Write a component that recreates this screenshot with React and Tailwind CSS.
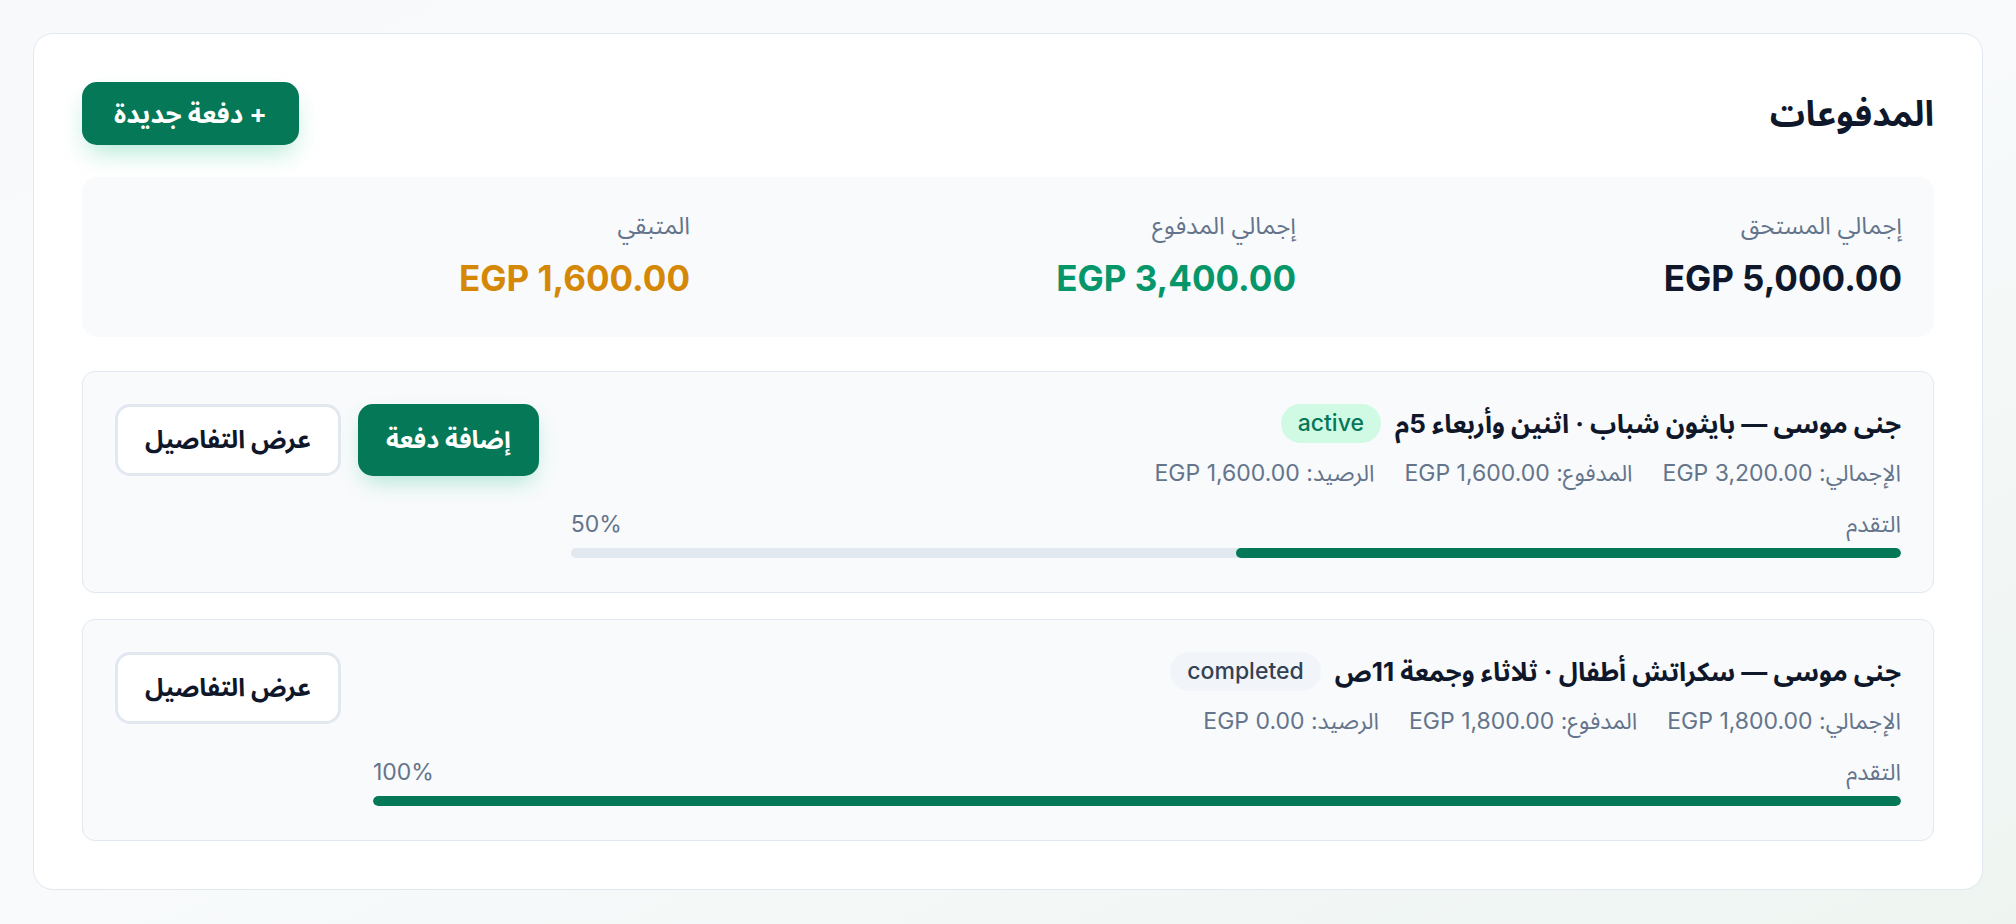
import React from "react";

const payments = [
  {
    id: 1,
    title: "جنى موسى — بايثون شباب · اثنين وأربعاء 5م",
    status: "active",
    total: "EGP 3,200.00",
    paid: "EGP 1,600.00",
    balance: "EGP 1,600.00",
    progress: 50,
    canPay: true,
  },
  {
    id: 2,
    title: "جنى موسى — سكراتش أطفال · ثلاثاء وجمعة 11ص",
    status: "completed",
    total: "EGP 1,800.00",
    paid: "EGP 1,800.00",
    balance: "EGP 0.00",
    progress: 100,
    canPay: false,
  },
];

function StatusBadge({ status }) {
  const styles =
    status === "active"
      ? "bg-[#d1fae5] text-[#047857]"
      : "bg-[#f1f5f9] text-[#334155]";
  return (
    <span
      className={`inline-flex h-[39px] items-center rounded-full px-[17px] text-[23px] font-medium ${styles}`}
    >
      {status}
    </span>
  );
}

function PaymentCard({ item }) {
  return (
    <div className="flex items-start gap-[32px] rounded-[13px] border border-[#e2e8f0] bg-[#f8fafc] px-[32px] pb-[34px] pt-[32px]">
      {/* Info */}
      <div className="flex-1">
        <div className="flex h-[39px] items-center gap-[14px]">
          <h3 className="text-[26px] font-bold text-[#0f172a]">{item.title}</h3>
          <StatusBadge status={item.status} />
        </div>

        <div className="mt-[15px] flex gap-[30px] text-[23px] leading-[30px] text-[#64748b]">
          <span>الإجمالي: {item.total}</span>
          <span>المدفوع: {item.paid}</span>
          <span>الرصيد: {item.balance}</span>
        </div>

        <div className="mt-[21px] flex items-center justify-between text-[23px] leading-[30px] text-[#64748b]">
          <span>التقدم</span>
          <span>{item.progress}%</span>
        </div>
        <div className="mt-[9px] h-[10px] w-full overflow-hidden rounded-full bg-[#e2e8f0]">
          <div
            className="h-full rounded-full bg-[#047857]"
            style={{ width: `${item.progress}%` }}
          />
        </div>
      </div>

      {/* Actions */}
      <div className="flex shrink-0 items-center gap-[17px]">
        {item.canPay && (
          <button className="h-[72px] rounded-[15px] bg-[#047857] px-[28px] text-[25px] font-bold text-white shadow-[0_10px_22px_-6px_rgba(16,185,129,0.35)]">
            إضافة دفعة
          </button>
        )}
        <button className="h-[72px] rounded-[15px] border-[3px] border-[#e2e8f0] bg-white px-[27px] text-[25px] font-bold text-[#0f172a]">
          عرض التفاصيل
        </button>
      </div>
    </div>
  );
}

export default function App() {
  return (
    <div
      dir="rtl"
      className="min-h-screen bg-gradient-to-br from-[#f7f9fa] via-[#f8fafb] to-[#eef5f1] p-[33px]"
      style={{ fontFamily: '"Inter", "Noto Sans Arabic", "DejaVu Sans", sans-serif' }}
    >
      <div className="rounded-[20px] border border-[#e2e8f0] bg-white p-[48px]">
        {/* Header */}
        <div className="flex items-center justify-between">
          <h2 className="text-[35px] font-bold text-[#0f172a]">المدفوعات</h2>
          <button className="h-[63px] rounded-[15px] bg-[#047857] px-[32px] text-[26px] font-bold text-white shadow-[0_12px_26px_-6px_rgba(16,185,129,0.35)]">
            + دفعة جديدة
          </button>
        </div>

        {/* Summary */}
        <div className="mt-[32px] grid grid-cols-3 gap-[30px] rounded-[15px] bg-[#f8fafc] px-[32px] pb-[37px] pt-[34px]">
          <div>
            <p className="text-[24px] leading-[30px] text-[#64748b]">إجمالي المستحق</p>
            <p className="mt-[15px] text-[35px] font-bold leading-[44px] text-[#0f172a]">EGP 5,000.00</p>
          </div>
          <div>
            <p className="text-[24px] leading-[30px] text-[#64748b]">إجمالي المدفوع</p>
            <p className="mt-[15px] text-[35px] font-bold leading-[44px] text-[#059669]">EGP 3,400.00</p>
          </div>
          <div>
            <p className="text-[24px] leading-[30px] text-[#64748b]">المتبقي</p>
            <p className="mt-[15px] text-[35px] font-bold leading-[44px] text-[#d48806]">EGP 1,600.00</p>
          </div>
        </div>

        {/* Payments list */}
        <div className="mt-[34px] flex flex-col gap-[26px]">
          {payments.map((item) => (
            <PaymentCard key={item.id} item={item} />
          ))}
        </div>
      </div>
    </div>
  );
}
